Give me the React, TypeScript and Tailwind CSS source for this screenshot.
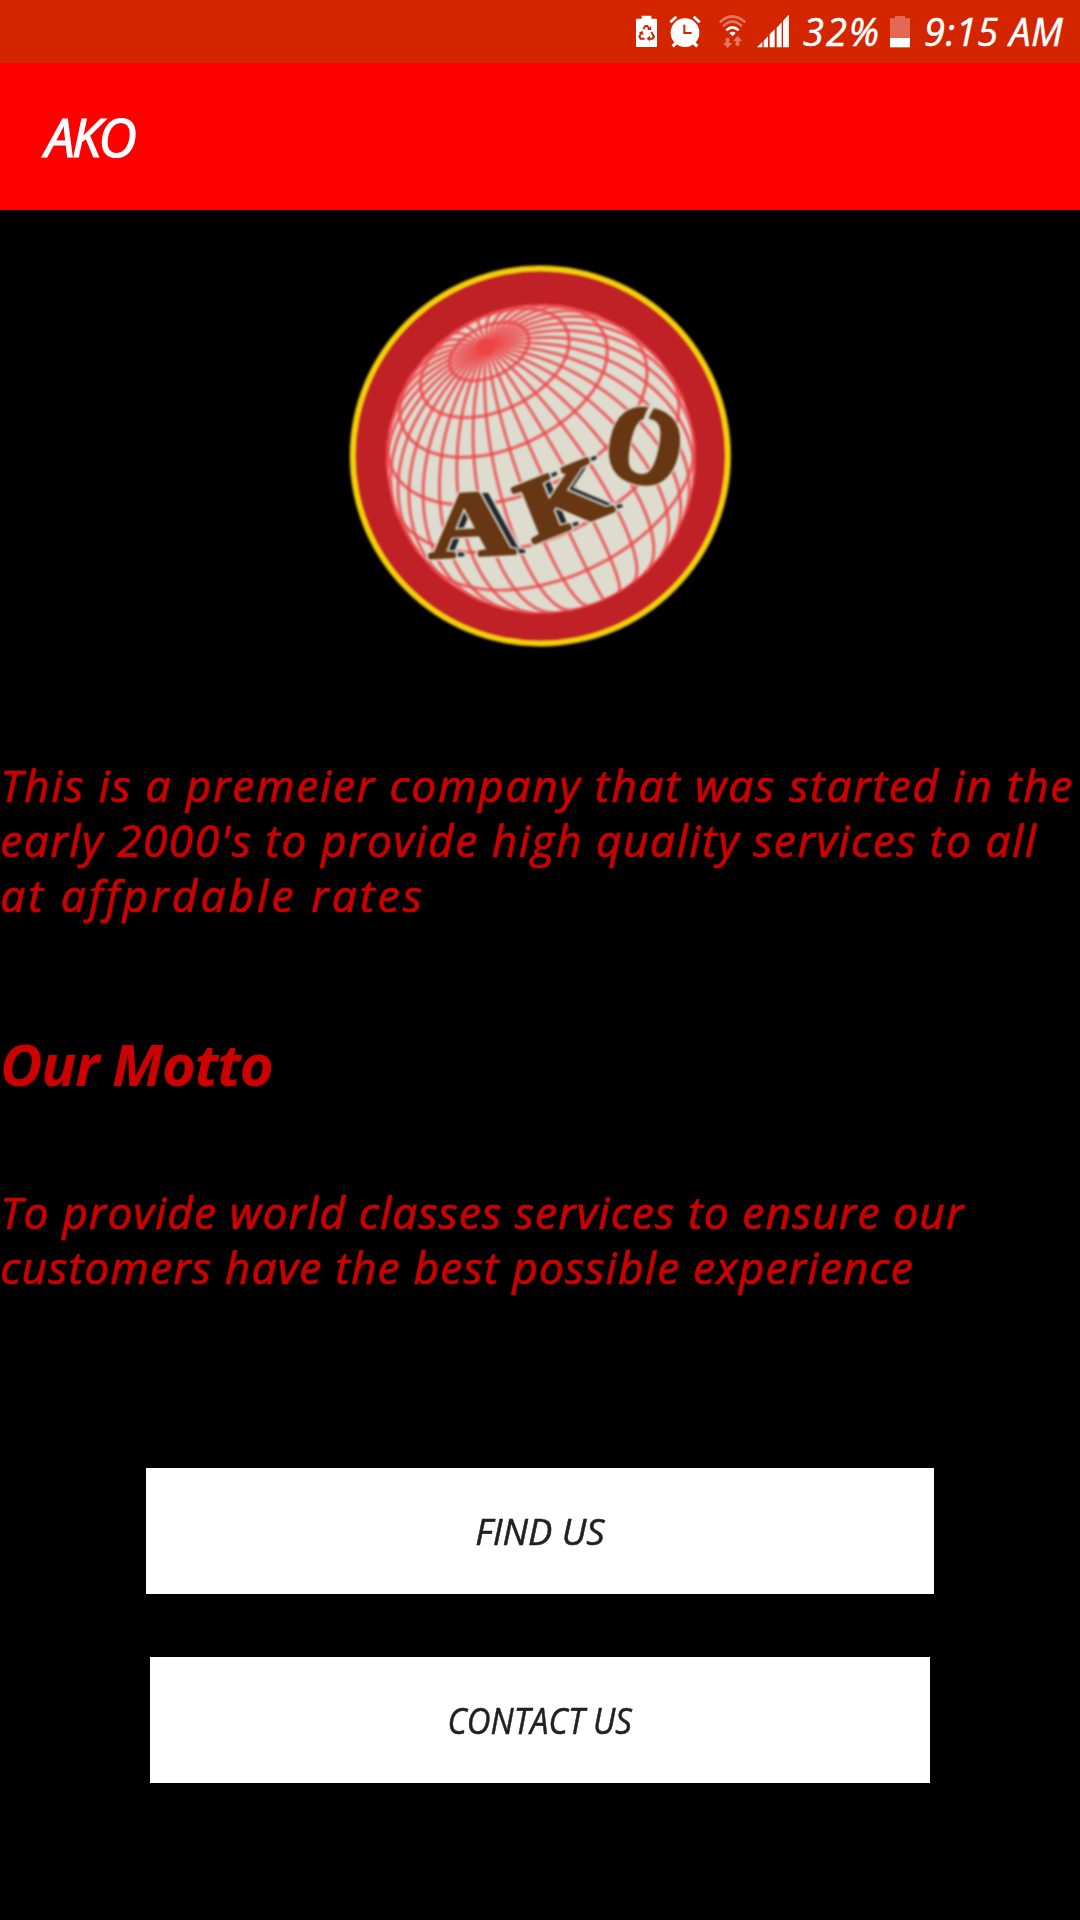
const RAD = Math.PI / 180;
const R = 154;
const CX = 201;
const CY = 204;
const TILT = 53.8 * RAD;
const AX = [-0.434, -0.901];

// Orthographic projection of a point given by its angle from the pole and its longitude.
function project(colat: number, lon: number) {
  const x = Math.sin(colat) * Math.sin(lon);
  const y = -Math.sin(colat) * Math.cos(lon);
  const z = Math.cos(colat);
  const along = y * Math.cos(TILT) + z * Math.sin(TILT);
  const depth = -y * Math.sin(TILT) + z * Math.cos(TILT);
  return {
    px: CX + R * (along * AX[0] - x * AX[1]),
    py: CY + R * (along * AX[1] + x * AX[0]),
    visible: depth > -0.01,
  };
}

function trace(points: { px: number; py: number; visible: boolean }[]) {
  let d = '';
  let pen = false;
  for (const p of points) {
    if (p.visible) {
      d += `${pen ? 'L' : 'M'}${p.px.toFixed(1)} ${p.py.toFixed(1)}`;
      pen = true;
    } else {
      pen = false;
    }
  }
  return d;
}

const parallels = [16, 31, 46, 64, 84, 105].map((c) =>
  trace(Array.from({ length: 121 }, (_, i) => project(c * RAD, i * 3 * RAD))),
);
const meridians = Array.from({ length: 36 }, (_, k) =>
  trace(Array.from({ length: 56 }, (_, i) => project(i * 3 * RAD, (k * 10 - 2.5) * RAD))),
);

function Letter({
  ch,
  size,
  transform,
  shadow,
  weight = 3,
}: {
  ch: string;
  size: number;
  transform: string;
  shadow: boolean;
  weight?: number;
}) {
  return (
    <g
      transform={transform}
      fontSize={size}
      fontWeight="bold"
      fontStyle="normal"
      fontFamily="'Liberation Serif', serif"
      paintOrder="stroke"
      strokeLinejoin="round"
    >
      {shadow && (
        <text x="8" y="0" fill="#20262c" stroke="#dddccf" strokeWidth="3">
          {ch}
        </text>
      )}
      <text x="0" y="0" fill="none" stroke="#dddccf" strokeWidth={weight + 3}>
        {ch}
      </text>
      <text x="0" y="0" fill="#673613" stroke="#673613" strokeWidth={weight}>
        {ch}
      </text>
    </g>
  );
}

function Logo() {
  return (
    <svg viewBox="0 0 400 400" className="h-[400px] w-[400px] blur-[0.8px]">
      <circle cx="200.3" cy="201" r="191" fill="#8a6a00" />
      <circle cx="200.3" cy="201" r="190" fill="#f2cf0a" />
      <circle cx="200.3" cy="201" r="184.500" fill="#c02126" />
      <circle cx={CX} cy={CY} r={R} fill="#dddccf" />
      <g fill="none" stroke="#ee4a4c" strokeOpacity="0.8">
        <g strokeWidth="3.4">
          {parallels.map((d, i) => (
            <path key={i} d={d} />
          ))}
        </g>
        <g strokeWidth="3.2">
          {meridians.map((d, i) => (
            <path key={i} d={d} />
          ))}
        </g>
        <circle cx={CX} cy={CY} r={R} strokeWidth="2" />
      </g>
      <circle cx="146" cy="92" r="9" fill="#ee4445" />
      <Letter ch="A" size={94} transform="translate(89 303) rotate(-3) scale(1.28 1)" shadow />
      <Letter ch="K" size={88} transform="translate(193 288) rotate(-22) scale(1.28 1)" shadow weight={4} />
      <Letter ch="O" size={108} transform="translate(261 218) rotate(12) scale(0.88 1)" shadow={false} weight={6} />
      <path d="M315 148Q308 155 305 168" stroke="#dddccf" strokeWidth="5" fill="none" />
    </svg>
  );
}

function StatusBar() {
  return (
    <div className="flex h-[63px] items-start justify-end bg-[#d32600] pr-4 text-white">
      <svg viewBox="48 45 63 99" className="mt-[15px] h-[33px] w-[21px]">
        <path d="M65 47h29v9h14q3 0 3 3v79q0 3-3 3H51q-3 0-3-3V59q0-3 3-3h14z" fill="#fff" />
        <g fill="none" stroke="#d32600" strokeWidth="6">
          <path d="M70 87l6-9h6l6 9" />
          <path d="M65 96l-7 14 4 6h12" />
          <path d="M94 96l8 14-4 6H87" />
        </g>
        <path d="M82 90h12l-1-12zM56 98l12-5 3 12zM90 107v17l-10-8z" fill="#d32600" />
      </svg>
      <svg viewBox="147 45 99 99" className="ml-[12px] mt-[15px] h-[33px] w-[33px]">
        <circle cx="195" cy="98" r="43" fill="#fff" />
        <path d="M151 67l18-17M221 50l18 17" stroke="#fff" strokeWidth="8" />
        <path d="M170 127l-12 12M220 127l12 12" stroke="#fff" strokeWidth="10" />
        <path d="M193 74v25h22" stroke="#d32600" strokeWidth="6" fill="none" />
      </svg>
      <svg viewBox="297 45 81 99" className="ml-[17px] mt-[15px] h-[33px] w-[27px]">
        <g fill="none" strokeWidth="8">
          <path d="M299 67Q337 32 376 67" stroke="#e3765f" />
          <path d="M309 79Q337 51 366 79" stroke="#e3765f" />
          <path d="M319 91Q337 73 356 91" stroke="#fff" />
        </g>
        <path d="M328 99q9-8 19 0l-9 10z" fill="#fff" />
        <path d="M317 114h11v15h9l-14 15-14-15h8zM347 137v-14h-8l14-16 13 16h-8v14z" fill="#e3765f" />
      </svg>
      <svg viewBox="411 45 96 99" className="ml-[11px] mt-[15px] h-[33px] w-8">
        <path
          d="M411 142l16-16v16zM431 122l13-13v33h-13zM449 103l15-15v54h-15zM470 83l15-16v75h-15zM489 63l14-16 4-3v98h-18z"
          fill="#fff"
        />
        <path d="M504 45v97" stroke="#d32600" strokeWidth="1.500" strokeOpacity="0.4" />
      </svg>
      <span className="ml-[14px] mt-px w-[78px] text-[38px] leading-[60px] font-medium tracking-[2px] whitespace-nowrap [-webkit-text-stroke:0.5px_#fff]">
        32%
      </span>
      <svg viewBox="810 45 60 99" className="ml-[9px] mt-[15px] h-[33px] w-5">
        <path d="M825 48h30v7h15v59h-60V55h15z" fill="#e36a52" />
        <path d="M810 114h60v28h-60z" fill="#fff" />
      </svg>
      <span className="ml-[14px] mt-px w-[140px] text-[38px] leading-[60px] font-medium tracking-[0.6px] whitespace-nowrap [-webkit-text-stroke:0.5px_#fff]">
        9:15 AM
      </span>
    </div>
  );
}

export default function App() {
  return (
    <div className="flex h-[1920px] w-[1080px] flex-col overflow-hidden bg-black font-['Open_Sans',sans-serif] italic">
      <StatusBar />
      <header className="flex h-[147px] items-center bg-[#ff0000] pl-[45px]">
        <h1 className="text-[53px] leading-none font-medium tracking-[-3px] text-white [-webkit-text-stroke:1.2px_#fff]">
          AKO
        </h1>
      </header>
      <main className="flex flex-col text-[#cc0000]">
        <div className="mt-[45px] flex justify-center">
          <Logo />
        </div>
        <div className="mt-[103px] text-[44px] leading-[55px] font-medium whitespace-nowrap [-webkit-text-stroke:0.7px_#cc0000]">
          <p className="tracking-[1.88px]">This is a premeier company that was started in the</p>
          <p className="tracking-[1.64px]">early 2000's to provide high quality services to all</p>
          <p className="tracking-[3.2px]">at affprdable rates</p>
        </div>
        <h2 className="mt-[101px] text-[58px] leading-[80px] font-bold tracking-[-1.2px]">Our Motto</h2>
        <div className="mt-[81px] text-[44px] leading-[55px] font-medium whitespace-nowrap [-webkit-text-stroke:0.7px_#cc0000]">
          <p className="tracking-[1.24px]">To provide world classes services to ensure our</p>
          <p className="tracking-[1.3px]">customers have the best possible experience</p>
        </div>
        <div className="mt-[173px] flex flex-col items-center gap-[63px] text-[37px] font-medium text-[#212121] [-webkit-text-stroke:0.5px_#212121]">
          <button className="flex h-[126px] w-[788px] items-center justify-center bg-white">
            <span className="scale-x-[0.98]">FIND US</span>
          </button>
          <button className="flex h-[126px] w-[780px] items-center justify-center bg-white">
            <span className="scale-x-[0.89]">CONTACT US</span>
          </button>
        </div>
      </main>
    </div>
  );
}
